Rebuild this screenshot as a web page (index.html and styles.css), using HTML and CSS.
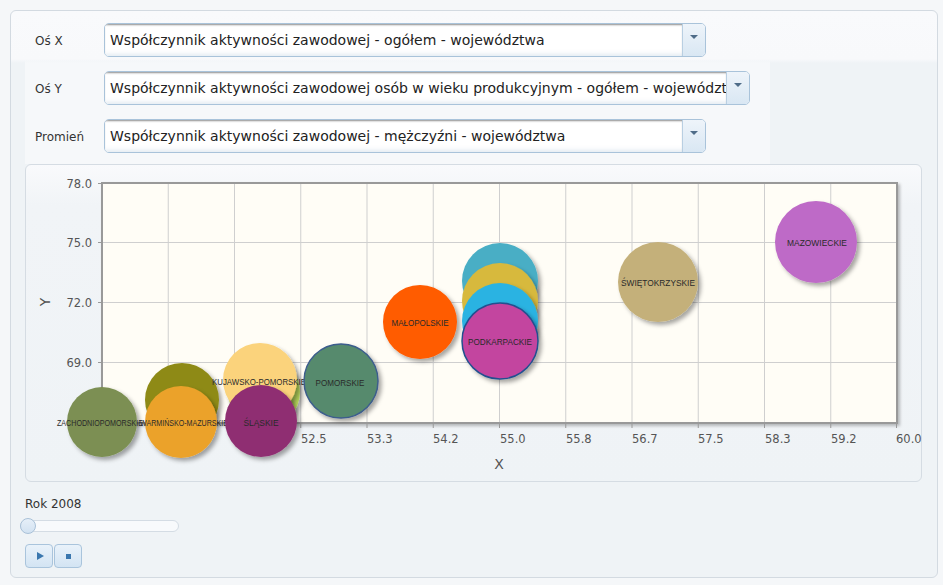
FILE: index.html
```html
<!DOCTYPE html>
<html lang="pl">
<head>
<meta charset="utf-8">
<title>Wykres bąbelkowy</title>
<link rel="stylesheet" href="styles.css">
</head>
<body>
<div class="panel">
  <div class="form">
    <div class="row">
      <div class="label">Oś X</div>
      <div class="select w-short">
        <div class="select-value">Współczynnik aktywności zawodowej - ogółem - województwa</div>
        <div class="select-btn"><span class="caret"></span></div>
      </div>
    </div>
    <div class="row">
      <div class="label">Oś Y</div>
      <div class="select w-long">
        <div class="select-value">Współczynnik aktywności zawodowej osób w wieku produkcyjnym - ogółem - województwa</div>
        <div class="select-btn"><span class="caret"></span></div>
      </div>
    </div>
    <div class="row">
      <div class="label">Promień</div>
      <div class="select w-short">
        <div class="select-value">Współczynnik aktywności zawodowej - mężczyźni - województwa</div>
        <div class="select-btn"><span class="caret"></span></div>
      </div>
    </div>
  </div>

  <div class="chart">
    <svg class="chart-svg" width="894" height="315" viewBox="0 0 894 315" xmlns="http://www.w3.org/2000/svg">
      <defs>
        <filter id="sh" x="-30%" y="-30%" width="160%" height="160%">
          <feDropShadow dx="3" dy="3" stdDeviation="2" flood-color="#000" flood-opacity="0.35"/>
        </filter>
        <filter id="psh" x="-5%" y="-5%" width="110%" height="110%">
          <feDropShadow dx="2" dy="2" stdDeviation="1.5" flood-color="#000" flood-opacity="0.25"/>
        </filter>
      </defs>
      <g transform="translate(-26,-165)">
        <rect x="102" y="183" width="795" height="240" fill="#fffdf6" stroke="#999" stroke-width="2" filter="url(#psh)"/>
        <g stroke="#cfcfcf" stroke-width="1">
          <line x1="168.25" y1="184" x2="168.25" y2="422"/>
          <line x1="234.5" y1="184" x2="234.5" y2="422"/>
          <line x1="300.75" y1="184" x2="300.75" y2="422"/>
          <line x1="367" y1="184" x2="367" y2="422"/>
          <line x1="433.25" y1="184" x2="433.25" y2="422"/>
          <line x1="499.5" y1="184" x2="499.5" y2="422"/>
          <line x1="565.75" y1="184" x2="565.75" y2="422"/>
          <line x1="632" y1="184" x2="632" y2="422"/>
          <line x1="698.25" y1="184" x2="698.25" y2="422"/>
          <line x1="764.5" y1="184" x2="764.5" y2="422"/>
          <line x1="830.75" y1="184" x2="830.75" y2="422"/>
          <line x1="103" y1="242.5" x2="896" y2="242.5"/>
          <line x1="103" y1="302.5" x2="896" y2="302.5"/>
          <line x1="103" y1="362.5" x2="896" y2="362.5"/>
        </g>
        <rect x="102" y="183" width="795" height="240" fill="none" stroke="#999" stroke-width="2"/>
        <g stroke="#999" stroke-width="1">
          <line x1="98" y1="183.5" x2="102" y2="183.5"/>
          <line x1="98" y1="242.5" x2="102" y2="242.5"/>
          <line x1="98" y1="302.5" x2="102" y2="302.5"/>
          <line x1="98" y1="362.5" x2="102" y2="362.5"/>
          <line x1="98" y1="422.5" x2="102" y2="422.5"/>
          <line x1="300.75" y1="423" x2="300.75" y2="428"/>
          <line x1="367" y1="423" x2="367" y2="428"/>
          <line x1="433.25" y1="423" x2="433.25" y2="428"/>
          <line x1="499.5" y1="423" x2="499.5" y2="428"/>
          <line x1="565.75" y1="423" x2="565.75" y2="428"/>
          <line x1="632" y1="423" x2="632" y2="428"/>
          <line x1="698.25" y1="423" x2="698.25" y2="428"/>
          <line x1="764.5" y1="423" x2="764.5" y2="428"/>
          <line x1="830.75" y1="423" x2="830.75" y2="428"/>
          <line x1="896.5" y1="423" x2="896.5" y2="428"/>
        </g>
        <g class="tick" text-anchor="end">
          <text x="92" y="187.5">78.0</text>
          <text x="92" y="246.5">75.0</text>
          <text x="92" y="306.5">72.0</text>
          <text x="92" y="366.5">69.0</text>
          <text x="92" y="426.5">66.0</text>
        </g>
        <g class="tick">
          <text x="102" y="443">50.0</text>
          <text x="168" y="443">50.8</text>
          <text x="234" y="443">51.7</text>
          <text x="301" y="443">52.5</text>
          <text x="367" y="443">53.3</text>
          <text x="433" y="443">54.2</text>
          <text x="500" y="443">55.0</text>
          <text x="566" y="443">55.8</text>
          <text x="632" y="443">56.7</text>
          <text x="698" y="443">57.5</text>
          <text x="765" y="443">58.3</text>
          <text x="831" y="443">59.2</text>
          <text x="896" y="443">60.0</text>
        </g>
        <text class="axis-title" x="499" y="469" text-anchor="middle">X</text>
        <text class="axis-title" x="0" y="0" text-anchor="middle" transform="translate(50,302) rotate(-90)">Y</text>

        <g class="bubbles">
          <circle cx="102" cy="422" r="35" fill="#7b8f52" filter="url(#sh)"/>
          <text class="bl" x="100" y="425.5" text-anchor="middle" textLength="86" lengthAdjust="spacingAndGlyphs">ZACHODNIOPOMORSKIE</text>
          <circle cx="182" cy="400" r="37" fill="#8e8a17" filter="url(#sh)"/>
          <circle cx="181" cy="422" r="36" fill="#eba22b" filter="url(#sh)"/>
          <text class="bl" x="184" y="425.5" text-anchor="middle" textLength="88" lengthAdjust="spacingAndGlyphs">WARMIŃSKO-MAZURSKIE</text>
          <circle cx="264" cy="392" r="36" fill="#b4d35c" filter="url(#sh)"/>
          <circle cx="260" cy="380" r="37" fill="#fbd37b" filter="url(#sh)"/>
          <text class="bl" x="259" y="385" text-anchor="middle" textLength="94" lengthAdjust="spacingAndGlyphs">KUJAWSKO-POMORSKIE</text>
          <circle cx="261" cy="421" r="36" fill="#8f2f72" filter="url(#sh)"/>
          <text class="bl" x="261" y="425.5" text-anchor="middle" textLength="35" lengthAdjust="spacingAndGlyphs">ŚLĄSKIE</text>
          <circle cx="341" cy="381" r="37" fill="#568a6d" stroke="#3c5d8c" stroke-width="1.5" filter="url(#sh)"/>
          <text class="bl" x="340" y="385.5" text-anchor="middle" textLength="49" lengthAdjust="spacingAndGlyphs">POMORSKIE</text>
          <circle cx="420" cy="322" r="37" fill="#ff5b00" filter="url(#sh)"/>
          <text class="bl" x="420" y="325.5" text-anchor="middle" textLength="57" lengthAdjust="spacingAndGlyphs">MAŁOPOLSKIE</text>
          <circle cx="500" cy="281" r="38" fill="#4aaec5" filter="url(#sh)"/>
          <circle cx="500" cy="301" r="38" fill="#d7b93d" filter="url(#sh)"/>
          <circle cx="500" cy="321" r="38" fill="#2ab3e2" filter="url(#sh)"/>
          <circle cx="500" cy="341" r="38" fill="#c3449f" stroke="#23508f" stroke-width="1.5" filter="url(#sh)"/>
          <text class="bl" x="500" y="345" text-anchor="middle" textLength="64" lengthAdjust="spacingAndGlyphs">PODKARPACKIE</text>
          <circle cx="658" cy="282" r="40" fill="#c4b07a" filter="url(#sh)"/>
          <text class="bl" x="658" y="286" text-anchor="middle" textLength="74" lengthAdjust="spacingAndGlyphs">ŚWIĘTOKRZYSKIE</text>
          <circle cx="816" cy="242" r="41" fill="#be6bc7" filter="url(#sh)"/>
          <text class="bl" x="817" y="246" text-anchor="middle" textLength="60" lengthAdjust="spacingAndGlyphs">MAZOWIECKIE</text>
        </g>
      </g>
    </svg>
  </div>

  <div class="player">
    <div class="year">Rok 2008</div>
    <div class="slider"><span class="thumb"></span></div>
    <div class="buttons">
      <button class="pbtn" type="button" aria-label="Odtwórz"><span class="play"></span></button>
      <button class="pbtn" type="button" aria-label="Zatrzymaj"><span class="stop"></span></button>
    </div>
  </div>
</div>
</body>
</html>
```

FILE: styles.css
```css
html, body {
  margin: 0;
  padding: 0;
}
body {
  background: #f5f7f9;
  font-family: "DejaVu Sans", Verdana, sans-serif;
  color: #333;
  padding: 10px 0 0 10px;
}
.panel {
  box-sizing: border-box;
  width: 928px;
  height: 568px;
  border: 1px solid #d3dae1;
  border-radius: 6px;
  background: linear-gradient(#f9fafc 0px, #f8f9fb 48px, #eff3f6 52px, #eff3f6 100%);
  padding: 12px 0 0 14px;
}
.form {
  width: 735px;
  padding-left: 10px;
  display: flex;
  flex-direction: column;
  gap: 14px;
  background: linear-gradient(rgba(248,249,251,0) 0, rgba(248,249,251,0) 36px, #f6f8fa 40px);
  padding-bottom: 11px;
}
.row {
  display: flex;
  align-items: center;
  height: 34px;
}
.label {
  width: 69px;
  flex: none;
  font-size: 12px;
  color: #333;
  padding-top: 1px;
}
.select {
  box-sizing: border-box;
  height: 34px;
  display: flex;
  border: 1px solid #a9c3da;
  border-radius: 5px;
  background: #fff;
  overflow: hidden;
}
.w-short { width: 602px; }
.w-long { width: 646px; }
.select-value {
  flex: 1;
  min-width: 0;
  white-space: nowrap;
  overflow: hidden;
  font-size: 14px;
  color: #222;
  padding: 0 0 0 5px;
  line-height: 32px;
  box-shadow: inset 0 2px 2px -1px rgba(0,0,0,0.45), inset 0 -6px 4px -4px rgba(200,215,230,0.5);
  background: #fff;
}
.select-btn {
  width: 23px;
  flex: none;
  border-left: 1px solid #b9cfe2;
  background: linear-gradient(#eef4fa, #d9e7f3);
  display: flex;
  justify-content: center;
  padding-top: 11px;
  box-sizing: border-box;
}
.caret {
  width: 0;
  height: 0;
  border-left: 4px solid transparent;
  border-right: 4px solid transparent;
  border-top: 4px solid #4f6c88;
}
.chart {
  box-sizing: border-box;
  width: 897px;
  height: 318px;
  border: 1px solid #d5dce3;
  border-radius: 6px;
  background: linear-gradient(#f9fafc 0, #f1f4f7 40px, #eff3f6 100%);
}
.chart-svg {
  display: block;
  overflow: visible;
}
.tick {
  font-family: "DejaVu Sans", Verdana, sans-serif;
  font-size: 11.5px;
  fill: #555;
}
.axis-title {
  font-family: "DejaVu Sans", Verdana, sans-serif;
  font-size: 14px;
  fill: #555;
}
.bl {
  font-family: "Liberation Sans", Arial, sans-serif;
  font-size: 9.5px;
  fill: #2a2a2a;
}
.player {
  padding: 14px 0 0 0;
}
.year {
  font-size: 12px;
  color: #333;
  line-height: 16px;
}
.slider {
  position: relative;
  box-sizing: border-box;
  width: 159px;
  height: 12px;
  margin: 8px 0 0 -5px;
  border: 1px solid #d4dce4;
  border-radius: 6px;
  background: #f8fafc;
}
.thumb {
  position: absolute;
  left: -1px;
  top: -3px;
  box-sizing: border-box;
  width: 16px;
  height: 16px;
  border-radius: 50%;
  border: 1px solid #a9c1d8;
  background: linear-gradient(#e6eff8, #d2e2f1);
}
.buttons {
  display: flex;
  gap: 1px;
  margin-top: 12px;
}
.pbtn {
  box-sizing: border-box;
  width: 28px;
  height: 24px;
  padding: 0;
  border: 1px solid #a9c4dc;
  border-radius: 4px;
  background: linear-gradient(#e9f2fa, #d3e4f3);
  display: flex;
  align-items: center;
  justify-content: center;
}
.play {
  width: 0;
  height: 0;
  border-top: 4px solid transparent;
  border-bottom: 4px solid transparent;
  border-left: 7px solid #3a77ae;
  margin-left: 2px;
}
.stop {
  width: 5px;
  height: 5px;
  background: #3a77ae;
}
```
